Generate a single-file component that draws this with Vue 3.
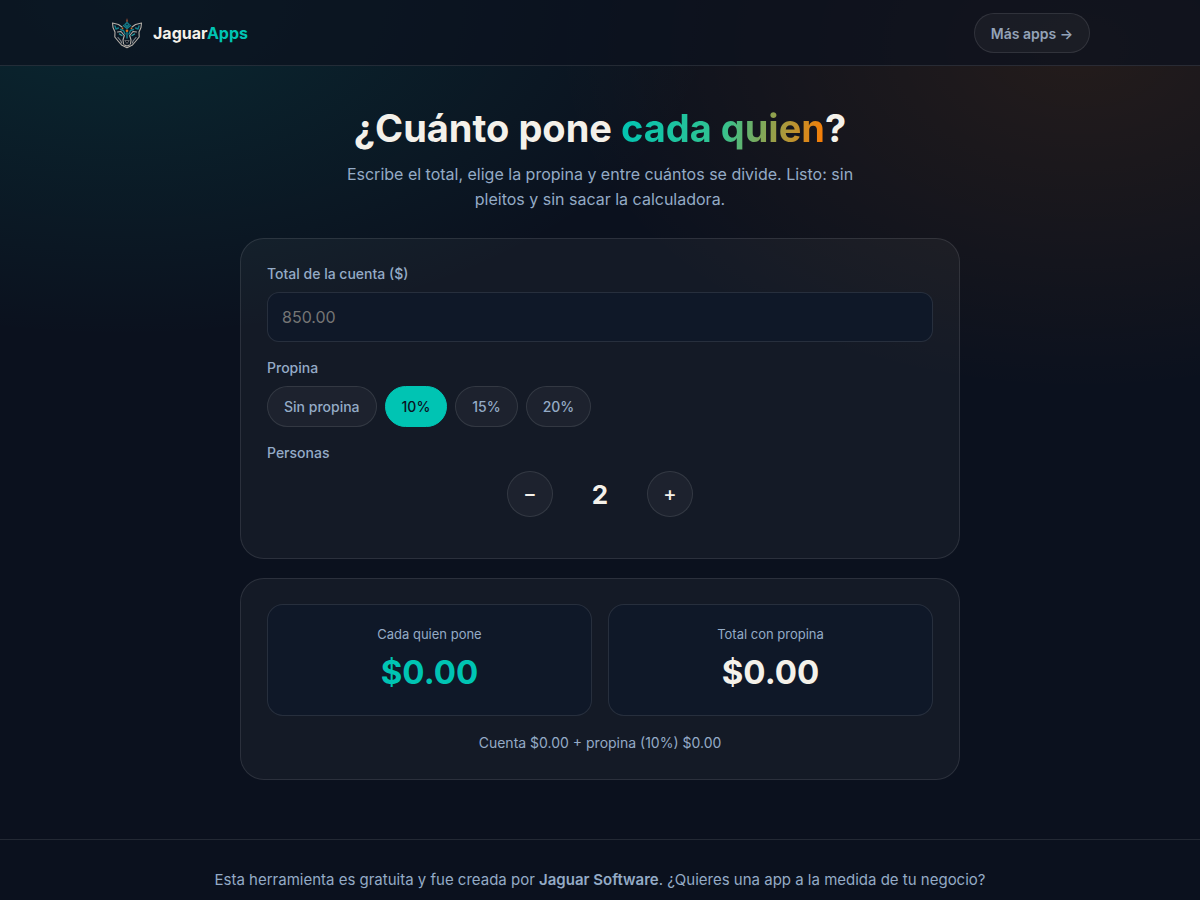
<script setup>
import { computed, ref } from 'vue'

const bill = ref('')
const tip = ref(10)
const people = ref(2)
const tips = [
  { value: 0, label: 'Sin propina' },
  { value: 10, label: '10%' },
  { value: 15, label: '15%' },
  { value: 20, label: '20%' }
]

const amount = computed(() => Math.max(0, Number(bill.value) || 0))
const tipAmount = computed(() => (amount.value * tip.value) / 100)
const total = computed(() => amount.value + tipAmount.value)
const money = (n) =>
  '$' + n.toLocaleString('en-US', { minimumFractionDigits: 2, maximumFractionDigits: 2 })
</script>

<template>
  <div class="page">
    <header class="topbar">
      <div class="topbar-inner">
        <a class="brand" href="#">
          <svg class="logo" viewBox="0 0 34 34" aria-hidden="true">
            <g fill="none" stroke-linecap="round" stroke-linejoin="round">
              <g stroke="#b5b0a9" stroke-width="1.100">
                <path d="M12 11 L8.500 8.500 L2.500 7 L3 11.500 L5 16 L4.800 21 L8.500 25.500 L11.500 29 L17 31.800 L22.500 29 L25.500 25.500 L29.200 21 L29 16 L31 11.500 L31.500 7 L25.500 8.500 L22 11" />
                <path d="M7.500 16 L11 15.500 L14.300 19.500 L13 24 L13.500 28 M26.500 16 L23 15.500 L19.700 19.500 L21 24 L20.500 28" />
                <path d="M8 21.500 L11 25 L11.500 27 M26 21.500 L23 25 L22.500 27" stroke="#85888b" />
                <path d="M14.500 29 L17 30 L19.500 29" />
              </g>
              <g stroke="#147f8b" stroke-width="1.400">
                <path d="M5 10 L6 13 L8.500 12 M29 10 L28 13 L25.500 12" />
                <path d="M9.500 18 L12 19.500 M24.500 18 L22 19.500" stroke="#2aa3a8" />
                <path d="M10.500 13.500 L13.500 14.500 L15 18 M23.500 13.500 L20.500 14.500 L19 18" />
                <path d="M13.500 9.500 L17 12.500 L20.500 9.500 M17 15 V22" />
              </g>
            </g>
            <path d="M17 2 L18 5 L17 7 L16 5Z" fill="#8a4932" />
            <path d="M17 5.500 L20 8.500 L17 12 L14 8.500Z" fill="#147482" />
            <circle cx="17" cy="8.500" r=".7" fill="#0b111e" />
            <circle cx="17" cy="14.700" r="1.300" fill="#d56f24" />
            <circle cx="12.500" cy="12.300" r=".9" fill="#d56f24" />
            <circle cx="21.500" cy="12.300" r=".9" fill="#d56f24" />
            <path d="M14.800 24.500 H19.200 L17 27.500Z" fill="#080c14" stroke="#909294" stroke-width=".6" />
          </svg>
          <span>Jaguar<span class="accent">Apps</span></span>
        </a>
        <a class="more" href="#">Más apps →</a>
      </div>
    </header>

    <main class="main">
      <h1>¿Cuánto pone <span class="gradient">cada quien</span>?</h1>
      <p class="lead">
        Escribe el total, elige la propina y entre cuántos se divide. Listo: sin pleitos y sin sacar la calculadora.
      </p>

      <section class="card">
        <label class="label" for="bill">Total de la cuenta ($)</label>
        <input id="bill" v-model="bill" class="bill" inputmode="decimal" placeholder="850.00" />

        <div id="tip-label" class="label">Propina</div>
        <div class="chips" role="group" aria-labelledby="tip-label">
          <button
            v-for="t in tips"
            :key="t.value"
            type="button"
            class="chip"
            :class="{ active: tip === t.value }"
            :aria-pressed="tip === t.value"
            @click="tip = t.value"
          >{{ t.label }}</button>
        </div>

        <div id="people-label" class="label">Personas</div>
        <div class="stepper" role="group" aria-labelledby="people-label">
          <button type="button" class="step" aria-label="Menos personas" @click="people = Math.max(1, people - 1)">−</button>
          <output class="count">{{ people }}</output>
          <button type="button" class="step" aria-label="Más personas" @click="people++">+</button>
        </div>
      </section>

      <section class="card results">
        <div class="tiles">
          <div class="tile">
            <div class="tile-label">Cada quien pone</div>
            <div class="value accent">{{ money(total / people) }}</div>
          </div>
          <div class="tile">
            <div class="tile-label">Total con propina</div>
            <div class="value">{{ money(total) }}</div>
          </div>
        </div>
        <p class="summary">Cuenta {{ money(amount) }} + propina ({{ tip }}%) {{ money(tipAmount) }}</p>
      </section>
    </main>

    <footer class="footer">
      Esta herramienta es gratuita y fue creada por <strong>Jaguar Software</strong>. ¿Quieres una app a la medida de tu negocio?
    </footer>
  </div>
</template>

<style>
body {
  margin: 0;
  background: #0b111e;
}
</style>

<style scoped>
.page {
  min-height: 100vh;
  box-sizing: border-box;
  color: #f4f1ea;
  font-family: Inter, "Liberation Sans", sans-serif;
  font-size: 16px;
  line-height: 25px;
  background:
    radial-gradient(700px 460px at 90% 5%, rgba(255, 122, 0, 0.1), transparent 75%),
    radial-gradient(800px 450px at 10% 0%, rgba(0, 196, 179, 0.13), transparent 75%),
    #0b111e;
}
.page * {
  box-sizing: border-box;
}
.topbar {
  background: rgba(11, 17, 30, 0.7);
  border-bottom: 1px solid rgba(255, 255, 255, 0.1);
}
.topbar-inner {
  max-width: 1020px;
  margin: 0 auto;
  padding: 13px 20px 12px;
  display: flex;
  align-items: center;
  justify-content: space-between;
}
.brand {
  display: flex;
  align-items: center;
  gap: 9px;
  color: inherit;
  text-decoration: none;
  font-size: 16px;
  font-weight: 700;
}
.logo {
  width: 34px;
  height: 34px;
}
.accent {
  color: #00c4b3;
}
.more {
  height: 40px;
  padding: 0 16px;
  display: flex;
  align-items: center;
  border: 1px solid rgba(255, 255, 255, 0.1);
  border-radius: 20px;
  background: rgba(255, 255, 255, 0.04);
  color: #94a3b8;
  font-size: 14px;
  font-weight: 600;
  text-decoration: none;
}
.main {
  max-width: 760px;
  margin: 0 auto;
  padding: 38px 20px 59px;
}
h1 {
  margin: 0 0 10px;
  text-align: center;
  font-size: 38px;
  line-height: 48px;
  font-weight: 700;
}
.gradient {
  background: linear-gradient(100deg, #00c4b3, #34c38f 50%, #ff7a00);
  -webkit-background-clip: text;
  background-clip: text;
  color: transparent;
}
.lead {
  max-width: 520px;
  margin: 0 auto 26px;
  text-align: center;
  color: #94abc6;
}
.card {
  padding: 25px 26px;
  border: 1px solid rgba(255, 255, 255, 0.1);
  border-radius: 24px;
  background: rgba(255, 255, 255, 0.04);
}
.results {
  margin-top: 19px;
}
.label {
  display: block;
  margin-bottom: 8px;
  color: #94abc6;
  font-size: 14px;
  line-height: 20px;
  font-weight: 500;
}
.bill {
  display: block;
  width: 100%;
  height: 50px;
  margin-bottom: 16px;
  padding: 0 14px;
  border: 1px solid rgba(255, 255, 255, 0.1);
  border-radius: 12px;
  outline: none;
  background: #0f1828;
  color: #f4f1ea;
  font: inherit;
}
.bill::placeholder {
  color: #757575;
}
.chips {
  display: flex;
  flex-wrap: wrap;
  gap: 8px;
  margin-bottom: 16px;
}
.chip {
  height: 41px;
  padding: 0 16px;
  border: 1px solid rgba(255, 255, 255, 0.1);
  border-radius: 21px;
  background: rgba(255, 255, 255, 0.04);
  color: #94abc6;
  font: inherit;
  font-size: 14px;
  font-weight: 500;
}
.chip.active {
  border-color: #00c4b3;
  background: #00c4b3;
  color: #0b111e;
}
.stepper {
  display: flex;
  align-items: center;
  justify-content: center;
  gap: 20px;
  margin-bottom: 16px;
}
.step {
  width: 46px;
  height: 46px;
  padding: 0;
  border: 1px solid rgba(255, 255, 255, 0.1);
  border-radius: 50%;
  background: rgba(255, 255, 255, 0.04);
  color: #f4f1ea;
  font: inherit;
  font-size: 20px;
  font-weight: 500;
}
.count {
  width: 54px;
  text-align: center;
  font-size: 26px;
  font-weight: 700;
}
.tiles {
  display: grid;
  grid-template-columns: 1fr 1fr;
  gap: 16px;
}
.tile {
  padding: 18px 16px 22px;
  border: 1px solid rgba(255, 255, 255, 0.1);
  border-radius: 16px;
  background: #0f1828;
  text-align: center;
}
.tile-label {
  margin-bottom: 6px;
  color: #94abc6;
  font-size: 13px;
  line-height: 22px;
}
.value {
  font-size: 33px;
  line-height: 42px;
  font-weight: 700;
}
.summary {
  margin: 15px 0 0;
  color: #94abc6;
  font-size: 14px;
  line-height: 23px;
  text-align: center;
}
.footer {
  padding: 28px 20px;
  border-top: 1px solid rgba(255, 255, 255, 0.1);
  color: #94abc6;
  font-size: 15px;
  line-height: 24px;
  text-align: center;
}
.footer strong {
  font-weight: 600;
}
</style>
